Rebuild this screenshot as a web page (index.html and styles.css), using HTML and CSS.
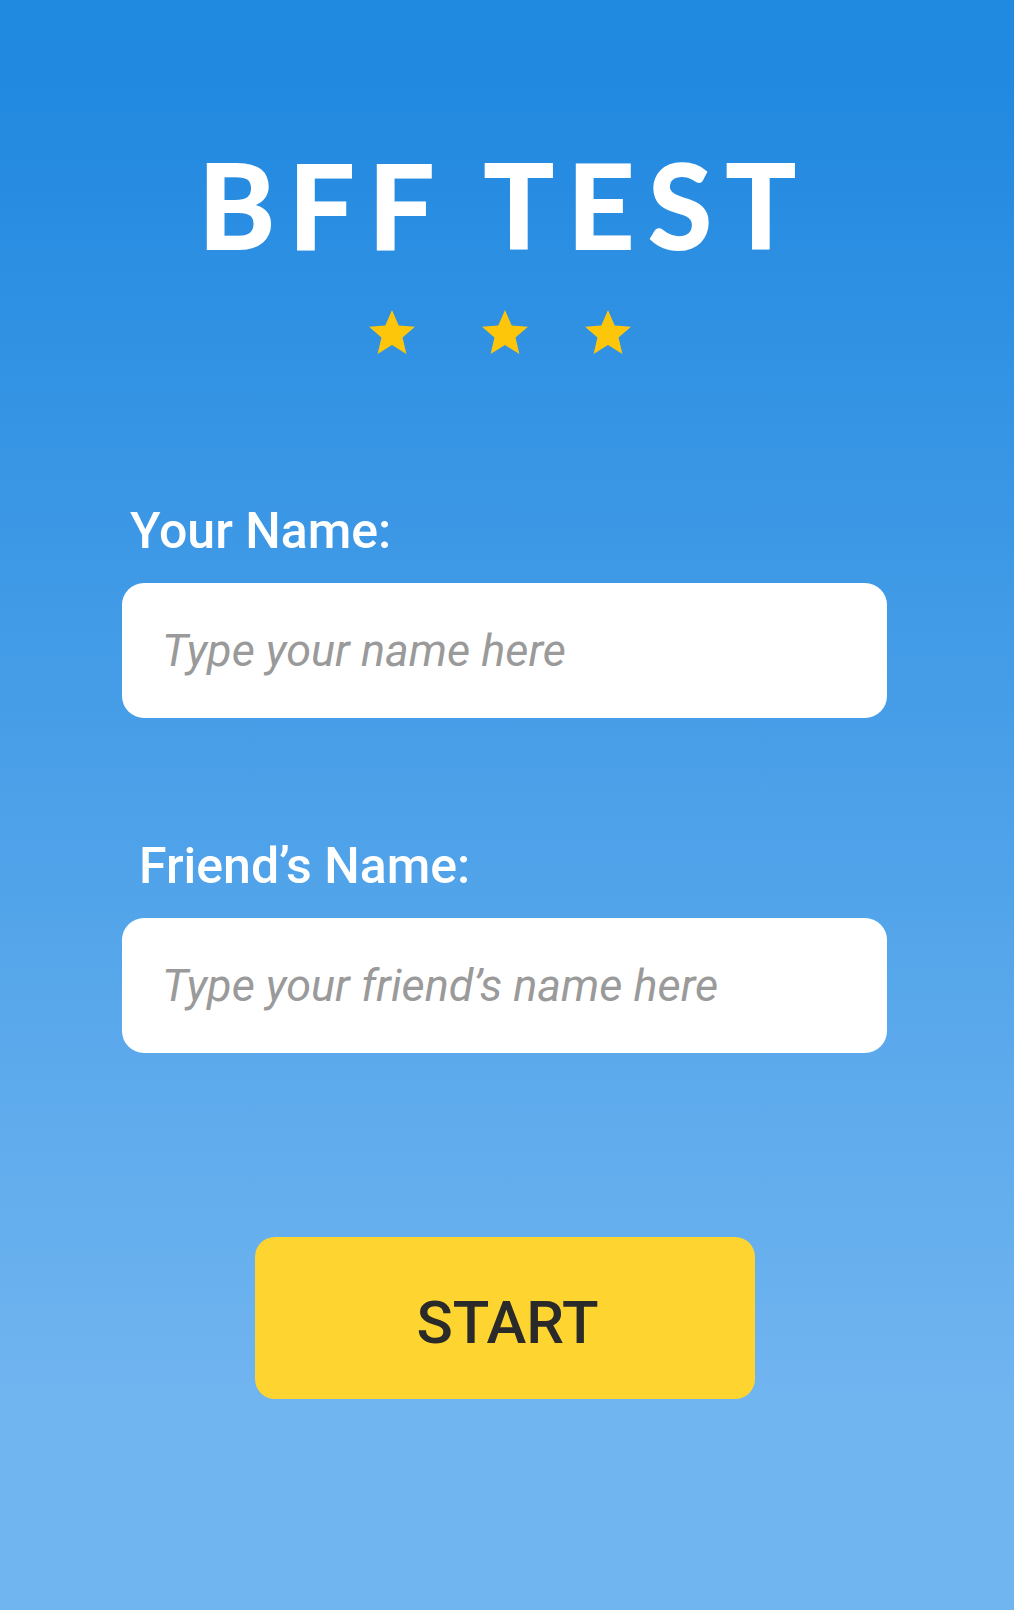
FILE: index.html
```html
<!DOCTYPE html>
<html lang="en">
<head>
  <meta charset="UTF-8">
  <title>BFF Test</title>
  <link rel="stylesheet" href="styles.css">
</head>
<body>
  <main class="screen">
    <h1 class="title">BFF TEST</h1>

    <div class="stars">
      <svg class="star star-first" viewBox="1.3 1.5 21.4 20.4"><path d="M12 1.5l3.1 7.2 7.6.6-5.8 5 1.8 7.6L12 17.8l-6.7 4.1 1.8-7.6-5.8-5 7.6-.6z"/></svg>
      <svg class="star" viewBox="1.3 1.5 21.4 20.4"><path d="M12 1.5l3.1 7.2 7.6.6-5.8 5 1.8 7.6L12 17.8l-6.7 4.1 1.8-7.6-5.8-5 7.6-.6z"/></svg>
      <svg class="star" viewBox="1.3 1.5 21.4 20.4"><path d="M12 1.5l3.1 7.2 7.6.6-5.8 5 1.8 7.6L12 17.8l-6.7 4.1 1.8-7.6-5.8-5 7.6-.6z"/></svg>
    </div>

    <form class="names">
      <!-- you -->
      <label class="field">
        <span class="field-label">Your Name:</span>
        <input class="field-input" name="you" placeholder="Type your name here">
      </label>

      <!-- friend -->
      <label class="field field-friend">
        <span class="field-label">Friend’s Name:</span>
        <input class="field-input" name="friend" placeholder="Type your friend’s name here">
      </label>

      <button class="start" type="submit">START</button>
    </form>
  </main>
</body>
</html>
```

FILE: styles.css
```css
body {
  margin: 0;
  min-height: 1610px;
  background: linear-gradient(180deg, #2089e0 0%, #2189e0 5%, #71b5f0 88%, #71b5f0 100%);
  font-family: Roboto, "Liberation Sans", sans-serif;
}
.screen {
  display: flex;
  flex-direction: column;
  align-items: center;
  padding-top: 144px;
}
.title {
  margin: 0 6px 0 0;
  color: #fff;
  font-family: Lato, "DejaVu Sans", sans-serif;
  font-weight: 700;
  font-size: 116px;
  line-height: 122px;
  letter-spacing: 14px;
  -webkit-text-stroke: 2px #fff;
}
.stars {
  display: flex;
  gap: 57px;
  margin-top: 44px;
  margin-right: 14px;
}
.star {
  width: 46px;
  height: 44px;
  fill: #fdc60a;
}
.star-first {
  margin-right: 10px;
}
.names {
  display: flex;
  flex-direction: column;
  align-self: stretch;
  padding: 0 127px 0 122px;
  margin-top: 149px;
}
.field {
  display: flex;
  flex-direction: column;
}
.field-friend {
  margin-top: 120px;
}
.field-label {
  color: #fff;
  font-weight: 500;
  font-size: 50px;
  line-height: 56px;
  padding-left: 8px;
  margin-bottom: 24px;
}
.field-friend .field-label {
  padding-left: 17px;
}
.field-input {
  height: 135px;
  box-sizing: border-box;
  border: none;
  border-radius: 22px;
  background: #fff;
  padding: 0 40px;
  font-family: Roboto, sans-serif;
  font-size: 45px;
  font-style: italic;
  color: #333;
  outline: none;
}
.field-input::placeholder {
  color: #9a9a9a;
}
.start {
  align-self: center;
  width: 500px;
  height: 162px;
  margin-top: 184px;
  padding: 8px 0 0 6px;
  border: none;
  border-radius: 20px;
  background: #fed530;
  color: #2a2a2a;
  font-family: Roboto, sans-serif;
  font-weight: 500;
  font-size: 60px;
  cursor: pointer;
}
```
